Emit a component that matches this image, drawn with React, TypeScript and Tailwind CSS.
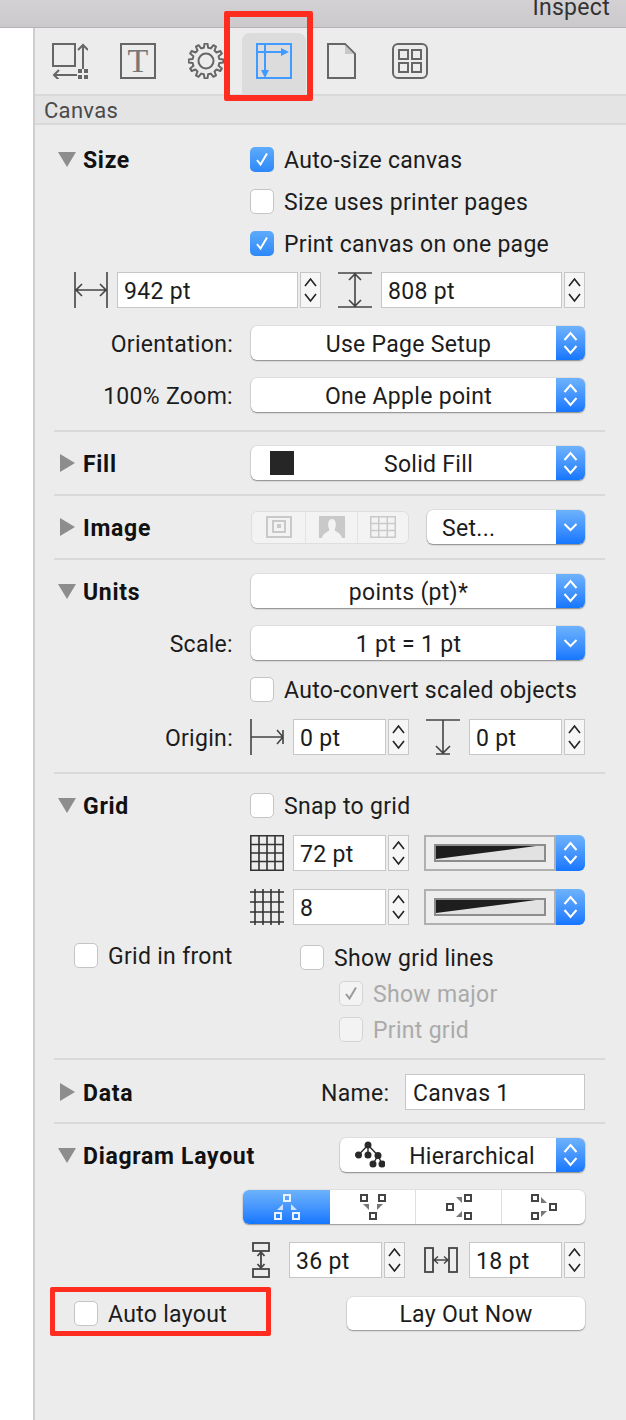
import type { ReactNode } from "react";

const gearPath = (cx: number, cy: number, outer: number, inner: number, teeth: number) => {
  const pts: string[] = [];
  const step = (Math.PI * 2) / teeth;
  for (let i = 0; i < teeth; i++) {
    const a = i * step - Math.PI / 2;
    const w = step * 0.2;
    const list: [number, number][] = [
      [inner, a - w * 1.5],
      [outer, a - w * 0.8],
      [outer, a + w * 0.8],
      [inner, a + w * 1.5],
    ];
    list.forEach(([r, t]) => pts.push(`${(cx + r * Math.cos(t)).toFixed(2)} ${(cy + r * Math.sin(t)).toFixed(2)}`));
  }
  return `M${pts.join("L")}Z`;
};

const Tri = ({ open }: { open?: boolean }) => (
  <svg width="18" height="18" viewBox="0 0 18 18" className="shrink-0">
    {open ? <path d="M0 2H18L9 17Z" fill="#8d8d8d" /> : <path d="M2 0L17 9L2 18Z" fill="#8d8d8d" />}
  </svg>
);

const Heading = ({ open, width = "w-[215px]", children }: { open?: boolean; width?: string; children: ReactNode }) => (
  <div className={`flex items-center pl-[23px] shrink-0 ${width}`}>
    <Tri open={open} />
    <span className="ml-[7px] pt-[2px] font-bold text-[#111] tracking-[0.7px]">{children}</span>
  </div>
);

const Label = ({ children }: { children: ReactNode }) => (
  <div className="w-[198px] mr-[17px] pt-[2px] text-right shrink-0">{children}</div>
);

const Check = ({ on, off, label, className = "" }: { on?: boolean; off?: boolean; label: string; className?: string }) => (
  <div className={`flex items-center ${className}`}>
    {on && !off ? (
      <span className="w-[24px] h-[25px] rounded-[5px] bg-gradient-to-b from-[#5dabfb] to-[#2c87f8] flex items-center justify-center">
        <svg width="16" height="16" viewBox="0 0 16 16"><path d="M3 9L6.5 13.5L13 2.5" fill="none" stroke="#fff" strokeWidth="2" /></svg>
      </span>
    ) : (
      <span className={`w-[24px] h-[25px] rounded-[5px] border flex items-center justify-center ${off ? "border-[#d4d4d4] bg-[#f3f3f3]" : "border-[#c4c4c4] bg-white"}`}>
        {on && <svg width="16" height="16" viewBox="0 0 16 16"><path d="M3 9L6.5 13.5L13 2.5" fill="none" stroke="#9a9a9a" strokeWidth="2" /></svg>}
      </span>
    )}
    <span className={`ml-[10px] pt-[2px] ${off ? "text-[#aaaaaa]" : ""}`}>{label}</span>
  </div>
);

const Stepper = () => (
  <div className="ml-[2px] w-[21px] h-[36px] border border-[#c6c6c6] bg-[#f6f6f6] flex items-center justify-center shrink-0">
    <svg width="13" height="26" viewBox="0 0 13 26">
      <path d="M1 9L6.5 2L12 9M1 17L6.5 24L12 17" fill="none" stroke="#222" strokeWidth="1.6" />
    </svg>
  </div>
);

const Field = ({ value, width }: { value: string; width: string }) => (
  <div className="flex items-center shrink-0">
    <div className={`h-[36px] ${width} border border-[#c6c6c6] bg-white flex items-center pl-[6px] pt-[2px]`}>{value}</div>
    <Stepper />
  </div>
);

const BlueCap = ({ single, className = "" }: { single?: boolean; className?: string }) => (
  <div className={`w-[29px] self-stretch shrink-0 bg-gradient-to-b from-[#6db2fb] to-[#1476ff] flex items-center justify-center ${className}`}>
    {single ? (
      <svg width="15" height="12" viewBox="0 0 15 12"><path d="M1.5 3L7.5 9L13.5 3" fill="none" stroke="#fff" strokeWidth="2" /></svg>
    ) : (
      <svg width="15" height="26" viewBox="0 0 15 26"><path d="M1.5 10L7.5 3L13.5 10M1.5 16L7.5 23L13.5 16" fill="none" stroke="#fff" strokeWidth="2" /></svg>
    )}
  </div>
);

const Select = ({ children, single, width = "w-[334px]" }: { children: ReactNode; single?: boolean; width?: string }) => (
  <div className={`${width} ml-[1px] h-[34px] rounded-[6px] bg-white flex items-stretch overflow-hidden shadow-[0_1px_1.5px_rgba(0,0,0,0.4),0_0_0_0.5px_rgba(0,0,0,0.1)] shrink-0`}>
    <div className="flex-1 flex items-center justify-center relative min-w-0 pl-[10px] pt-[2px]">{children}</div>
    <BlueCap single={single} />
  </div>
);

const Divider = ({ className = "" }: { className?: string }) => (
  <div className={`h-[2px] ml-[19px] mr-[21px] bg-[#d9d9d9] ${className}`} />
);

const Well = ({ className = "" }: { className?: string }) => (
  <div className={`w-[161px] h-[36px] flex items-stretch rounded-r-[6px] overflow-hidden shrink-0 ${className}`}>
    <div className="flex-1 border-2 border-[#b0b0b0] bg-[#ededed] flex items-center justify-center">
      <svg width="112" height="18" viewBox="0 0 112 18">
        <rect x="1" y="1" width="110" height="16" fill="#e2e2e2" stroke="#8c8c8c" strokeWidth="2" />
        <path d="M2 2H102L2 15Z" fill="#1e1e1e" />
      </svg>
    </div>
    <BlueCap />
  </div>
);

const NodeIcon = ({ boxes, tris, color, tri }: { boxes: [number, number][]; tris: string[]; color: string; tri: string }) => (
  <svg width="26" height="26" viewBox="0 0 26 26">
    {boxes.map(([x, y]) => (
      <rect key={`${x}-${y}`} x={x + 1} y={y + 1} width="6" height="6" fill="none" stroke={color} strokeWidth="2" />
    ))}
    {tris.map((d) => <path key={d} d={d} fill={tri} />)}
  </svg>
);

export default function App() {
  return (
    <div className="w-[626px] h-[1420px] overflow-hidden bg-white text-[23px] leading-none text-[#1c1c1c] font-['Roboto',sans-serif] tracking-[0.3px] relative">
      <div className="h-[28px] bg-gradient-to-b from-[#d3d1d3] to-[#cbc9cb] border-b border-[#b3b1b3] flex items-end justify-end pr-[16px] overflow-hidden">
        <span className="text-[#333] mb-[8px]">Inspect</span>
      </div>
      <div className="flex h-[1392px]">
        <div className="w-[33px] bg-white shrink-0" />
        <div className="flex-1 border-l-2 border-[#cfcfcf] bg-[#ececec]">
          <div className="flex items-end gap-1 pl-[3px] h-[66px]">
            <div className="w-[64px] h-[61px] flex justify-center pt-[10px]">
              <svg width="36" height="36" viewBox="0 0 36 36" fill="none" stroke="#666" strokeWidth="2">
                <rect x="1" y="1" width="22" height="22" />
                <path d="M31 26V2M26 7L31 2L36 7M25 32H2M7 27L2 32L7 37" />
                <path d="M26 26h4v4h-4zM32 26h4v4h-4zM26 32h4v4h-4zM32 32h4v4h-4z" fill="#666" stroke="none" />
              </svg>
            </div>
            <div className="w-[64px] h-[61px] flex justify-center pt-[10px]">
              <div className="w-[36px] h-[36px] border-2 border-[#666] flex items-center justify-center font-['Liberation_Serif',serif] text-[34px] text-[#777]">T</div>
            </div>
            <div className="w-[64px] h-[61px] flex justify-center pt-[10px]">
              <svg width="36" height="36" viewBox="0 0 36 36" fill="none" stroke="#666" strokeWidth="2">
                <path d={gearPath(18, 18, 17.5, 13.5, 12)} strokeLinejoin="round" />
                <circle cx="18" cy="18" r="7.5" />
              </svg>
            </div>
            <div className="w-[64px] h-[61px] rounded-t-[8px] bg-[#dcdcdc] flex justify-center pt-[10px]">
              <svg width="36" height="36" viewBox="0 0 36 36" fill="none" stroke="#3f9bff" strokeWidth="2">
                <rect x="1" y="1" width="34" height="34" />
                <path d="M1 9H26M9 1V28" />
                <path d="M25 5L33 9L25 13ZM5 27H13L9 35Z" fill="#3f9bff" stroke="none" />
              </svg>
            </div>
            <div className="w-[64px] h-[61px] flex justify-center pt-[10px]">
              <svg width="30" height="36" viewBox="0 0 30 36" fill="none" stroke="#666" strokeWidth="2">
                <path d="M1 1H18L28 11V35H1Z" />
                <path d="M18 2V11H27Z" fill="#c8c8c8" stroke="none" />
              </svg>
            </div>
            <div className="w-[64px] h-[61px] flex justify-center pt-[10px]">
              <svg width="36" height="36" viewBox="0 0 36 36" fill="none" stroke="#666" strokeWidth="2">
                <rect x="1" y="1" width="34" height="34" rx="5" />
                <rect x="7" y="7" width="9" height="9" />
                <rect x="20" y="7" width="9" height="9" />
                <rect x="7" y="20" width="9" height="9" />
                <rect x="20" y="20" width="9" height="9" />
              </svg>
            </div>
          </div>
          <div className="h-[31px] bg-[#e4e4e4] border-y-2 border-[#d9d9d9] flex items-center pl-[9px] pt-[2px] text-[22px] text-[#4a4a4a]">Canvas</div>

          {/* Size */}
          <div className="mt-[13px] h-[42px] flex items-center">
            <Heading open>Size</Heading>
            <Check on label="Auto-size canvas" />
          </div>
          <div className="h-[42px] flex items-center pl-[215px]"><Check label="Size uses printer pages" /></div>
          <div className="h-[42px] flex items-center pl-[215px]"><Check on label="Print canvas on one page" /></div>
          <div className="mt-[8px] h-[36px] flex items-center pl-[39px]">
            <svg width="34" height="36" viewBox="0 0 34 36" fill="none" stroke="#444" strokeWidth="1.6" className="mr-[9px]">
              <path d="M1 0V36M33 0V36M2 18H32M8 12L2 18L8 24M26 12L32 18L26 24" />
            </svg>
            <Field value="942 pt" width="w-[181px]" />
            <svg width="34" height="36" viewBox="0 0 34 36" fill="none" stroke="#444" strokeWidth="1.6" className="ml-[17px] mr-[9px]">
              <path d="M0 1H34M0 35H34M17 2V34M11 8L17 2L23 8M11 28L17 34L23 28" />
            </svg>
            <Field value="808 pt" width="w-[181px]" />
          </div>
          <div className="mt-[18px] flex items-center">
            <Label>Orientation:</Label>
            <Select>Use Page Setup</Select>
          </div>
          <div className="mt-[18px] flex items-center">
            <Label>100% Zoom:</Label>
            <Select>One Apple point</Select>
          </div>
          <Divider className="mt-[18px]" />

          {/* Fill */}
          <div className="mt-[14px] flex items-center">
            <Heading>Fill</Heading>
            <Select>
              <span className="absolute left-[19px] top-[5px] w-[24px] h-[24px] bg-[#262626]" />
              <span className="ml-[40px]">Solid Fill</span>
            </Select>
          </div>
          <Divider className="mt-[14px]" />

          {/* Image */}
          <div className="mt-[14px] h-[34px] flex items-center">
            <Heading>Image</Heading>
            <div className="w-[158px] ml-[1px] h-[33px] rounded-[6px] bg-[#f3f3f3] border border-[#dedede] flex items-stretch shrink-0">
              <div className="w-[54px] flex items-center justify-center border-r border-[#e2e2e2]">
                <svg width="26" height="22" viewBox="0 0 26 22" fill="none" stroke="#c9c9c9" strokeWidth="2">
                  <rect x="1" y="1" width="24" height="20" />
                  <rect x="7" y="5" width="12" height="11" />
                  <path d="M11 8h4v4h-4z" fill="#c9c9c9" stroke="none" />
                </svg>
              </div>
              <div className="w-[52px] flex items-center justify-center border-r border-[#e2e2e2]">
                <svg width="26" height="22" viewBox="0 0 26 22">
                  <rect width="26" height="22" fill="#c9c9c9" />
                  <path d="M3 22C4 17 9 16 10.5 14C8 9 9 3 13 3C17 3 18 9 15.5 14C17 16 22 17 23 22Z" fill="#f3f3f3" />
                </svg>
              </div>
              <div className="flex-1 flex items-center justify-center">
                <svg width="26" height="22" viewBox="0 0 26 22" fill="none" stroke="#c9c9c9" strokeWidth="1.5">
                  <path d="M.75.75H25.25V21.25H.75ZM0 7.5H26M0 14.5H26M8.75 0V22M17.25 0V22" />
                </svg>
              </div>
            </div>
            <div className="ml-[17px]">
              <Select single width="w-[158px]"><span className="w-full pl-[5px]">Set...</span></Select>
            </div>
          </div>
          <Divider className="mt-[14px]" />

          {/* Units */}
          <div className="mt-[14px] flex items-center">
            <Heading open>Units</Heading>
            <Select>points (pt)*</Select>
          </div>
          <div className="mt-[18px] flex items-center">
            <Label>Scale:</Label>
            <Select single>1 pt = 1 pt</Select>
          </div>
          <div className="mt-[12px] h-[34px] flex items-center pl-[215px]"><Check label="Auto-convert scaled objects" /></div>
          <div className="mt-[13px] h-[36px] flex items-center">
            <Label>Origin:</Label>
            <svg width="34" height="36" viewBox="0 0 34 36" fill="none" stroke="#444" strokeWidth="1.6" className="mr-[9px] shrink-0">
              <path d="M1 0V36M1 18H33M27 11L33 18L27 25M33 11V25" />
            </svg>
            <Field value="0 pt" width="w-[93px]" />
            <svg width="34" height="36" viewBox="0 0 34 36" fill="none" stroke="#444" strokeWidth="1.6" className="ml-[17px] mr-[9px] shrink-0">
              <path d="M0 1H34M17 1V34M10 27L17 34L24 27M10 35H24" />
            </svg>
            <Field value="0 pt" width="w-[93px]" />
          </div>
          <Divider className="mt-[17px]" />

          {/* Grid */}
          <div className="mt-[14px] h-[34px] flex items-center">
            <Heading open>Grid</Heading>
            <Check label="Snap to grid" />
          </div>
          <div className="mt-[13px] h-[36px] flex items-center pl-[215px]">
            <svg width="34" height="36" viewBox="0 0 34 36" fill="none" stroke="#333" strokeWidth="1.6" className="mr-[9px] shrink-0">
              <path d="M.8.8H33.2V35.2H.8ZM0 9.5H34M0 18H34M0 26.5H34M9 0V36M17 0V36M25 0V36" />
            </svg>
            <Field value="72 pt" width="w-[93px]" />
            <Well className="ml-[15px]" />
          </div>
          <div className="mt-[18px] h-[36px] flex items-center pl-[215px]">
            <svg width="34" height="36" viewBox="0 0 34 36" fill="none" stroke="#333" strokeWidth="1.6" className="mr-[9px] shrink-0">
              <path d="M0 3H34M0 13H34M0 23H34M0 33H34M5 0V36M13 0V36M21 0V36M29 0V36" />
            </svg>
            <Field value="8" width="w-[93px]" />
            <Well className="ml-[15px]" />
          </div>
          <div className="mt-[15px] h-[32px] flex items-center">
            <Check label="Grid in front" className="ml-[39px] w-[226px] shrink-0 -mt-[2px]" />
            <Check label="Show grid lines" className="mt-[2px]" />
          </div>
          <div className="mt-[5px] h-[32px] flex items-center pl-[304px]"><Check on off label="Show major" /></div>
          <div className="mt-[4px] h-[32px] flex items-center pl-[304px]"><Check off label="Print grid" /></div>
          <Divider className="mt-[13px]" />

          {/* Data */}
          <div className="mt-[15px] h-[34px] flex items-center">
            <Heading width="w-[286px]">Data</Heading>
            <span className="w-[66px] pt-[2px] text-right shrink-0">Name:</span>
            <div className="ml-[18px] w-[180px] h-[36px] border border-[#c6c6c6] bg-white flex items-center pl-[7px] pt-[2px] shrink-0">Canvas 1</div>
          </div>
          <Divider className="mt-[13px]" />

          {/* Diagram Layout */}
          <div className="mt-[14px] flex items-center">
            <Heading open width="w-[304px]">Diagram Layout</Heading>
            <Select width="w-[245px]">
              <svg width="30" height="28" viewBox="0 0 30 28" className="absolute left-[15px] top-[3px]" fill="#2a2a2a" stroke="#2a2a2a" strokeWidth="1.4">
                <path d="M13 4L3.500 14M13 4V14M13 4L23 14.500M23 14.500L18 23M23 14.500L27 23" fill="none" />
                <circle cx="13" cy="4" r="2.800" /><circle cx="3.500" cy="14" r="2.800" /><circle cx="13" cy="14" r="2.800" />
                <circle cx="23" cy="14.500" r="2.800" /><circle cx="18" cy="23" r="2.800" /><circle cx="27" cy="23" r="2.800" />
              </svg>
              <span className="ml-[38px]">Hierarchical</span>
            </Select>
          </div>
          <div className="mt-[18px] h-[34px] flex items-center pl-[208px]">
            <div className="w-[342px] h-[34px] rounded-[6px] bg-white flex items-stretch overflow-hidden shadow-[0_1px_1.5px_rgba(0,0,0,0.35),0_0_0_0.5px_rgba(0,0,0,0.08)]">
              <div className="w-[87px] bg-gradient-to-b from-[#6db2fb] to-[#1476ff] flex items-center justify-center">
                <NodeIcon boxes={[[9, 0], [0, 18], [18, 18]]} tris={["M9 10V16H3Z", "M17 10V16H23Z"]} color="#e9f2ff" tri="#cfe4ff" />
              </div>
              <div className="w-[86px] border-r border-[#dedede] flex items-center justify-center">
                <NodeIcon boxes={[[0, 0], [18, 0], [9, 18]]} tris={["M3 10H9V16Z", "M23 10H17V16Z"]} color="#444" tri="#777" />
              </div>
              <div className="w-[86px] border-r border-[#dedede] flex items-center justify-center">
                <NodeIcon boxes={[[0, 9], [18, 0], [18, 18]]} tris={["M10 3H16V9Z", "M10 23H16V17Z"]} color="#444" tri="#777" />
              </div>
              <div className="flex-1 flex items-center justify-center">
                <NodeIcon boxes={[[0, 0], [0, 18], [18, 9]]} tris={["M10 3V9H16Z", "M10 23V17H16Z"]} color="#444" tri="#777" />
              </div>
            </div>
          </div>
          <div className="mt-[18px] h-[36px] flex items-center pl-[217px]">
            <svg width="18" height="36" viewBox="0 0 18 36" fill="none" stroke="#444" strokeWidth="1.8" className="mr-[19px] shrink-0">
              <rect x="1" y="1" width="16" height="8" />
              <rect x="1" y="27" width="16" height="8" />
              <path d="M9 10V26M5.500 14L9 10L12.500 14M5.500 22L9 26L12.500 22" />
            </svg>
            <Field value="36 pt" width="w-[93px]" />
            <svg width="34" height="26" viewBox="0 0 34 26" fill="none" stroke="#444" strokeWidth="1.8" className="ml-[19px] mr-[11px] shrink-0">
              <rect x="1" y="1" width="8" height="24" />
              <rect x="25" y="1" width="8" height="24" />
              <path d="M10 13H24M14 9.500L10 13L14 16.500M20 9.500L24 13L20 16.500" strokeWidth="1.4" />
            </svg>
            <Field value="18 pt" width="w-[93px]" />
          </div>
          <div className="mt-[18px] h-[34px] flex items-center">
            <Check label="Auto layout" className="ml-[39px] w-[273px] shrink-0" />
            <div className="w-[238px] h-[33px] pt-[2px] rounded-[6px] bg-white flex items-center justify-center shadow-[0_1px_1.5px_rgba(0,0,0,0.35),0_0_0_0.5px_rgba(0,0,0,0.1)] shrink-0">Lay Out Now</div>
          </div>
        </div>
      </div>

      <div className="absolute left-[224px] top-[11px] w-[89px] h-[90px] border-[6px] border-[#ff2d1f] rounded-[2px]" />
      <div className="absolute left-[50px] top-[1287px] w-[221px] h-[49px] border-[5px] border-[#ff2d1f] rounded-[2px]" />
    </div>
  );
}
